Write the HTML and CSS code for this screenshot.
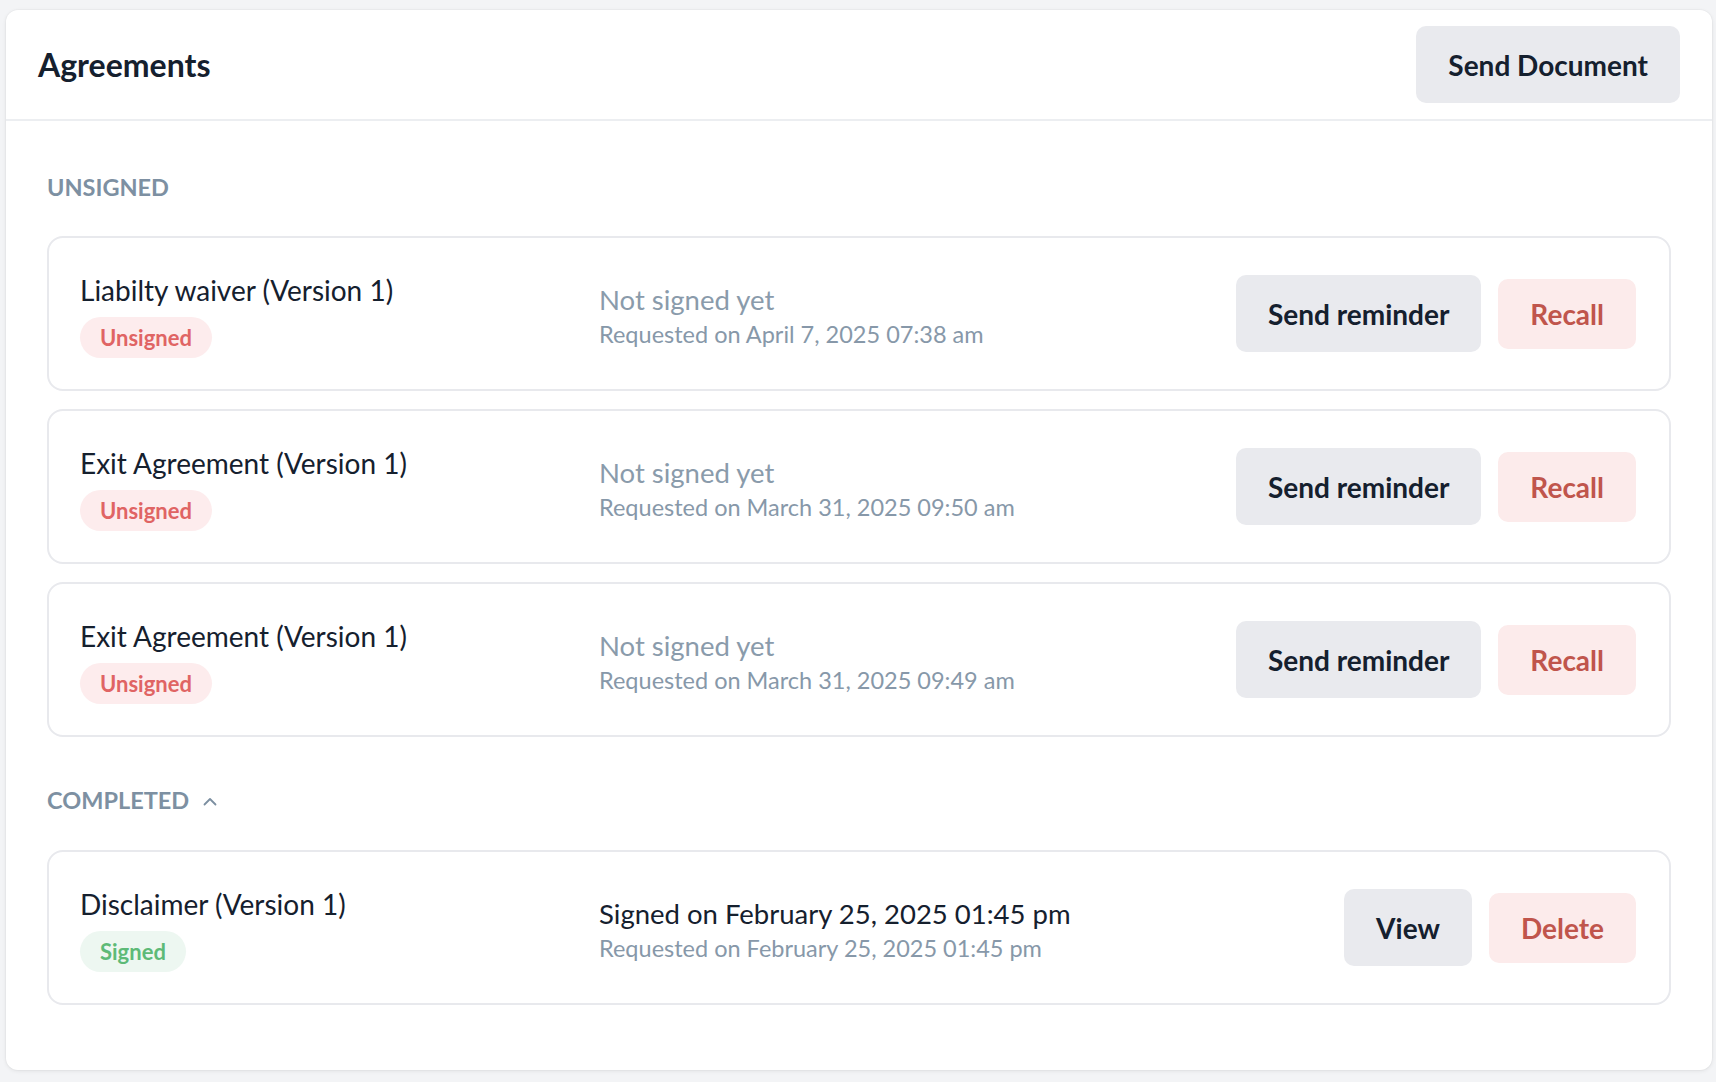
FILE: index.html
```html
<!DOCTYPE html>
<html lang="en">
<head>
<meta charset="utf-8">
<title>Agreements</title>
<link rel="stylesheet" href="styles.css">
</head>
<body>
<div class="panel">
  <header class="panel-head">
    <h1 class="panel-title">Agreements</h1>
    <button class="btn btn-gray btn-lg">Send Document</button>
  </header>
  <div class="panel-body">
    <section class="group">
      <h2 class="group-label">UNSIGNED</h2>
      <div class="list">
        <div class="item">
          <div class="item-info">
            <div class="item-name">Liabilty waiver (Version 1)</div>
            <span class="badge badge-red">Unsigned</span>
          </div>
          <div class="item-status">
            <div class="status-main muted">Not signed yet</div>
            <div class="status-sub">Requested on April 7, 2025 07:38 am</div>
          </div>
          <div class="item-actions">
            <button class="btn btn-gray">Send reminder</button>
            <button class="btn btn-red">Recall</button>
          </div>
        </div>
        <div class="item">
          <div class="item-info">
            <div class="item-name">Exit Agreement (Version 1)</div>
            <span class="badge badge-red">Unsigned</span>
          </div>
          <div class="item-status">
            <div class="status-main muted">Not signed yet</div>
            <div class="status-sub">Requested on March 31, 2025 09:50 am</div>
          </div>
          <div class="item-actions">
            <button class="btn btn-gray">Send reminder</button>
            <button class="btn btn-red">Recall</button>
          </div>
        </div>
        <div class="item">
          <div class="item-info">
            <div class="item-name">Exit Agreement (Version 1)</div>
            <span class="badge badge-red">Unsigned</span>
          </div>
          <div class="item-status">
            <div class="status-main muted">Not signed yet</div>
            <div class="status-sub">Requested on March 31, 2025 09:49 am</div>
          </div>
          <div class="item-actions">
            <button class="btn btn-gray">Send reminder</button>
            <button class="btn btn-red">Recall</button>
          </div>
        </div>
      </div>
    </section>
    <section class="group group-completed">
      <h2 class="group-label">COMPLETED
        <svg class="chev" width="14" height="9" viewBox="0 0 14 9" fill="none"><path d="M1.5 7.5 L7 2 L12.5 7.5" stroke="#7c8fa1" stroke-width="1.8" stroke-linecap="round" stroke-linejoin="round"/></svg>
      </h2>
      <div class="list">
        <div class="item">
          <div class="item-info">
            <div class="item-name">Disclaimer (Version 1)</div>
            <span class="badge badge-green">Signed</span>
          </div>
          <div class="item-status">
            <div class="status-main">Signed on February 25, 2025 01:45 pm</div>
            <div class="status-sub">Requested on February 25, 2025 01:45 pm</div>
          </div>
          <div class="item-actions">
            <button class="btn btn-gray">View</button>
            <button class="btn btn-red">Delete</button>
          </div>
        </div>
      </div>
    </section>
  </div>
</div>
</body>
</html>
```

FILE: styles.css
```css
* { box-sizing: border-box; }
html, body { margin: 0; }
body {
  background: #f3f4f6;
  padding: 10px 4px 12px 6px;
  font-family: Lato, "Open Sans", "Liberation Sans", sans-serif;
  color: #15202e;
}
.panel {
  background: #fff;
  border-radius: 12px;
  box-shadow: 0 1px 4px rgba(0,0,0,0.08), 0 0 0 1px rgba(0,0,0,0.02);
}
.panel-head {
  display: flex;
  align-items: center;
  justify-content: space-between;
  padding: 16px 32px;
  border-bottom: 2px solid #eceef1;
}
.panel-title {
  margin: 0;
  font-size: 32px;
  font-weight: 700;
  color: #15202e;
}
.btn {
  font-family: inherit;
  border: none;
  border-radius: 10px;
  font-weight: 700;
  font-size: 28px;
  cursor: pointer;
  line-height: 1;
}
.btn-gray {
  background: #e9eaee;
  color: #15202e;
  height: 77px;
  padding: 0 32px;
}
.btn-lg { padding: 0 32px; }
.btn-red {
  background: #fcebeb;
  color: #c0554c;
  height: 70px;
  padding: 0 32px;
}
.panel-body {
  padding: 51px 41px 65px;
}
.group-label {
  margin: 0 0 34px;
  font-size: 23.5px;
  font-weight: 700;
  color: #7d90a2;
  line-height: 30px;
  display: flex;
  align-items: center;
  gap: 14px;
}
.chev { margin-top: 2px; }
.group-completed { margin-top: 48px; }
.group-completed .group-label { margin-bottom: 35px; }
.list {
  display: flex;
  flex-direction: column;
  gap: 18px;
}
.item {
  display: flex;
  align-items: center;
  border: 2px solid #e8e9ed;
  border-radius: 16px;
  height: 155px;
  padding: 0 33px 0 31px;
}
.item-info {
  width: 519px;
  flex: none;
  padding-top: 2px;
}
.item-name {
  font-size: 28px;
  line-height: 36px;
  color: #15202e;
}
.badge {
  display: inline-block;
  margin-top: 9px;
  height: 41px;
  line-height: 41px;
  border-radius: 21px;
  padding: 0 20px;
  font-size: 22px;
  font-weight: 700;
}
.badge-red { background: #fdeced; color: #e06464; }
.badge-green { background: #edf7f1; color: #5dba77; }
.item-status { flex: 1; padding-top: 4px; }
.status-main {
  font-size: 27.5px;
  line-height: 36px;
  color: #15202e;
}
.status-main.muted { color: #8a9bab; }
.status-sub {
  font-size: 23.5px;
  line-height: 32px;
  color: #8798a9;
}
.item-actions {
  display: flex;
  align-items: center;
  gap: 17px;
}
```
